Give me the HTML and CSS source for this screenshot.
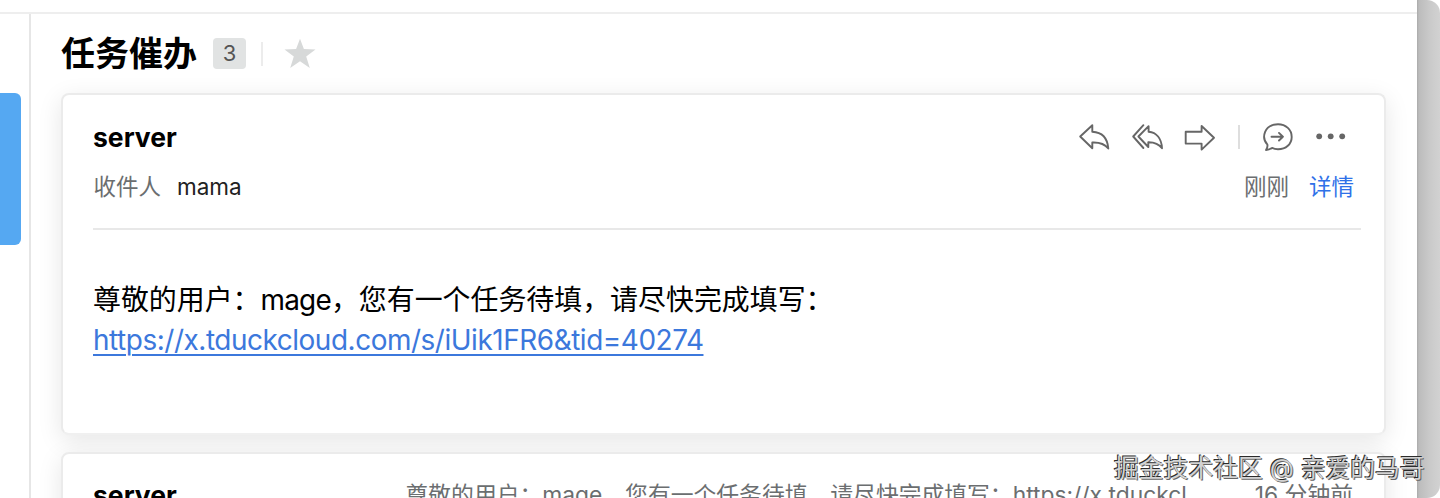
FILE: index.html
```html
<!DOCTYPE html>
<html lang="zh-CN">
<head>
<meta charset="utf-8">
<title>任务催办</title>
<link rel="stylesheet" href="styles.css">
</head>
<body>
<div class="desktop">
  <div class="window">
    <div class="toolbar"></div>
    <div class="panes">
      <aside class="sidebar"><div class="selected"></div></aside>
      <main class="thread">
        <header class="heading">
          <h1 class="title">任务催办</h1>
          <span class="count">3</span>
          <span class="rule"></span>
          <svg class="star" width="32" height="32" viewBox="0 0 32 32"><path d="M16 .7l3.900 10.400 11.600.5-9.300 6.900 3.600 11.500-9.800-6.700-9.800 6.700 3.600-11.500-9.300-6.900 11.600-.5z" fill="#d7d9d9"/></svg>
        </header>
        <article class="card open">
          <div class="row">
            <strong class="sender">server</strong>
            <div class="actions">
              <svg class="icon" width="34" height="32" viewBox="0 0 34 32"><path d="M2.200 15.500L14.300 4.200V10.700C24 11.200 29.500 17 30.300 27.500C26.500 22.600 21 21.200 14.300 21.500V27.300Z"/></svg>
              <svg class="icon reply-all" width="34" height="32" viewBox="0 0 34 32"><path d="M12.400 4.200L2.200 15.500L12.400 27M17.600 5.200L7.400 15.500L17.300 26V21.200C23 21.100 27.500 22.400 31 27.300C30.500 17.500 25.500 11.500 17.600 10.800Z"/></svg>
              <svg class="icon forward" width="34" height="32" viewBox="0 0 34 32"><path d="M2.700 10.700H18.600V5L31 16.800L18.600 28.600V22.600H2.700Z"/></svg>
              <span class="rule action-rule"></span>
              <svg class="icon chat" width="34" height="32" viewBox="0 0 34 32"><path d="M6.300 23.300C.2 17 3 3.300 17 3.300C25 3.300 30.700 8.700 30.700 15.900C30.700 23 25 28.200 17 28.200C14.600 28.200 12.600 27.700 11 26.900C9.200 28.300 7.300 28.900 5 29C6.300 27.200 6.800 25.300 6.300 23.300ZM10.500 15.700H21.800M18 11.900L21.900 15.700L18 19.500"/></svg>
              <svg class="dots" width="32" height="32" viewBox="0 0 32 32"><circle cx="4.200" cy="15.300" r="2.900"/><circle cx="15.700" cy="15.300" r="2.900"/><circle cx="27.200" cy="15.300" r="2.900"/></svg>
            </div>
          </div>
          <div class="row meta">
            <div><span class="label">收件人</span><span class="recipient">mama</span></div>
            <div><span class="time">刚刚</span><a class="detail">详情</a></div>
          </div>
          <div class="body">
            <p>尊敬的用户：<span class="latin">mage</span>，您有一个任务待填，请尽快完成填写：</p>
            <a class="link">https://x.tduckcloud.com/s/iUik1FR6&amp;tid=40274</a>
          </div>
        </article>
        <article class="card folded">
          <strong class="sender">server</strong>
          <span class="preview">尊敬的用户：mage，您有一个任务待填，请尽快完成填写：https://x.tduckcl</span>
          <span class="ago">16 分钟前</span>
        </article>
      </main>
    </div>
  </div>
  <div class="backdrop"></div>
  <div class="watermark">掘金技术社区 @ 亲爱的马哥</div>
</div>
</body>
</html>
```
FILE: styles.css
```css
* { box-sizing: border-box; }
body { margin: 0; background: #fff; font-family: Inter, "Noto Sans CJK SC", sans-serif; color: #000; }
.desktop { position: relative; display: flex; width: 1440px; height: 498px; overflow: hidden; }
.window { width: 1417px; display: flex; flex-direction: column; }
.backdrop { width: 23px; background: linear-gradient(90deg, #aaa 0, #bcbcbc 2px, #c9c9c9 12px, #d2d2d2 100%); border-radius: 0 13px 13px 0; }
.toolbar { height: 14px; flex: none; border-bottom: 2px solid #eee; }
.panes { display: flex; height: 484px; }
.sidebar { width: 31px; flex: none; border-right: 2px solid #e6e6e6; padding-top: 79px; }
.selected { width: 21px; height: 152px; background: #55a8f2; border-radius: 0 6px 6px 0; }
.thread { flex: 1; padding: 0 31px 0 30px; min-width: 0; overflow: hidden; }
.heading { height: 79px; display: flex; align-items: center; }
.title { margin: 0; font-size: 34px; line-height: 40px; font-weight: 700; white-space: nowrap; width: 137px; }
.count { width: 33px; height: 31px; margin-left: 15px; background: #e1e3e3; border-radius: 4px; color: #555; font-size: 22px; line-height: 31px; text-align: center; }
.rule { width: 2px; height: 24px; margin-left: 15px; background: #ececec; }
.star { margin-left: 21px; }
.card { background: #fff; border: 2px solid #ebebeb; border-radius: 8px; box-shadow: 0 6px 24px rgba(0,0,0,.1); }
.open { height: 342px; padding: 26px 23px 0 30px; border-bottom-color: #f0f0f0; }
.row { display: flex; justify-content: space-between; align-items: center; height: 32px; white-space: nowrap; }
.sender { font-size: 26.500px; line-height: 32px; font-weight: 700; }
.actions { display: flex; align-items: center; margin-right: 14px; }
.icon { fill: none; stroke: #666; stroke-width: 1.900; stroke-linejoin: round; stroke-linecap: round; }
.reply-all { margin-left: 19px; }
.forward { margin-left: 18px; }
.action-rule { margin-left: 21px; background: #dedede; }
.chat { margin-left: 21px; }
.dots { margin-left: 20px; fill: #666; }
.meta { margin-top: 16px; padding-right: 7px; font-size: 22.500px; }
.label, .time { color: #6b6e70; }
.label { margin-left: .5px; }
.recipient { margin-left: 16px; color: #222; }
.detail { margin-left: 20px; color: #2f71e8; }
.body { margin-top: 27px; border-top: 2px solid #e8e8e8; padding-top: 50px; font-size: 27.930px; line-height: 40px; white-space: nowrap; }
.body p { margin: 0; }
.latin { letter-spacing: -.8px; }
.link { color: #3c78dc; letter-spacing: -.45px; text-decoration: underline; text-decoration-thickness: 2px; text-underline-offset: 4px; }
.folded { margin-top: 17px; height: 120px; padding: 25px 31px 0 30px; display: flex; line-height: 32px; white-space: nowrap; color: #6b6e70; font-size: 22.800px; }
.folded .sender { width: 312.500px; color: #000; flex: none; }
.preview { width: 790px; }
.ago { margin-left: auto; }
.watermark { position: absolute; left: 1114px; top: 450px; font-size: 24.800px; line-height: 36px; color: #d2d2d2; text-shadow: -1px -1px 0 #2b2b2b, 1px 1px 0 #666; white-space: nowrap; }
```
